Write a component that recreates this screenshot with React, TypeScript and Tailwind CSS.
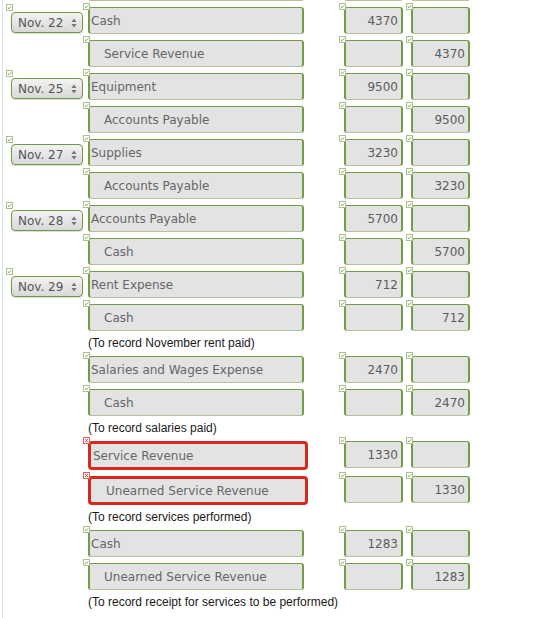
import React from 'react';

type Line =
  | {
      kind: 'row';
      date?: string;
      account: string;
      indent?: boolean;
      debit?: string;
      credit?: string;
      error?: boolean;
    }
  | { kind: 'memo'; text: string };

const lines: Line[] = [
  { kind: 'row', account: '' },
  { kind: 'row', date: 'Nov. 22', account: 'Cash', debit: '4370' },
  { kind: 'row', account: 'Service Revenue', indent: true, credit: '4370' },
  { kind: 'row', date: 'Nov. 25', account: 'Equipment', debit: '9500' },
  { kind: 'row', account: 'Accounts Payable', indent: true, credit: '9500' },
  { kind: 'row', date: 'Nov. 27', account: 'Supplies', debit: '3230' },
  { kind: 'row', account: 'Accounts Payable', indent: true, credit: '3230' },
  { kind: 'row', date: 'Nov. 28', account: 'Accounts Payable', debit: '5700' },
  { kind: 'row', account: 'Cash', indent: true, credit: '5700' },
  { kind: 'row', date: 'Nov. 29', account: 'Rent Expense', debit: '712' },
  { kind: 'row', account: 'Cash', indent: true, credit: '712' },
  { kind: 'memo', text: '(To record November rent paid)' },
  { kind: 'row', account: 'Salaries and Wages Expense', debit: '2470' },
  { kind: 'row', account: 'Cash', indent: true, credit: '2470' },
  { kind: 'memo', text: '(To record salaries paid)' },
  { kind: 'row', account: 'Service Revenue', debit: '1330', error: true },
  { kind: 'row', account: 'Unearned Service Revenue', indent: true, credit: '1330', error: true },
  { kind: 'memo', text: '(To record services performed)' },
  { kind: 'row', account: 'Cash', debit: '1283' },
  { kind: 'row', account: 'Unearned Service Revenue', indent: true, credit: '1283' },
  { kind: 'memo', text: '(To record receipt for services to be performed)' },
];

function Mark({ bad }: { bad?: boolean }) {
  return (
    <svg className="absolute left-0 top-0" width="7" height="7" viewBox="0 0 7 7">
      <rect x="0.5" y="0.5" width="6" height="6" fill="#fff" stroke={bad ? '#e0605a' : '#a9c28a'} />
      {bad ? (
        <path d="M2.2 2.2 L4.8 4.8 M4.8 2.2 L2.2 4.8" stroke="#d52b1e" strokeWidth="1" />
      ) : (
        <path d="M1.9 3.7 L3 4.7 L5.2 2.4" fill="none" stroke="#5f9632" strokeWidth="0.9" />
      )}
    </svg>
  );
}

function DateSelect({ value }: { value: string }) {
  return (
    <div className="relative mt-[1px] w-[77px] pl-[5px] pt-[8px]">
      <Mark />
      <div className="flex h-[21px] w-[72px] items-center justify-between rounded-[4px] border border-[#6f9b40] bg-gradient-to-b from-[#f3f3f3] to-[#d9d9d9] pl-[6px] pr-[5px] text-[12px] text-[#555] shadow-[0_1px_1px_rgba(0,0,0,0.15)]">
        <span>{value}</span>
        <svg width="6" height="10" viewBox="0 0 6 10">
          <path d="M3 0.5 L5.6 4 L0.4 4 Z" fill="#777" />
          <path d="M3 9.5 L5.6 6 L0.4 6 Z" fill="#777" />
        </svg>
      </div>
    </div>
  );
}

function Amount({ value, tall }: { value?: string; tall?: boolean }) {
  return (
    <div className={`relative pl-[5px] pt-[4px] ${tall ? 'h-[35px]' : 'h-[33px]'}`}>
      <Mark />
      <div className="flex h-[27px] w-[59px] items-center justify-end rounded-[3px] border border-x-2 border-[#729d45] border-b-[#b2c49c] bg-[#e3e3e3] pr-[3px] text-[12px] text-[#5c5c5c]">
        {value}
      </div>
    </div>
  );
}

export default function App() {
  return (
    <div className="ml-[2px] h-[618px] overflow-hidden border-l border-[#dde3ea] bg-white pl-[3px] font-['DejaVu_Sans',sans-serif]">
      <div className="-mt-[30px]">
        {lines.map((line, i) => {
          if (line.kind === 'memo') {
            return (
              <div
                key={i}
                className="flex h-[19px] items-center pl-[82px] font-['Liberation_Sans',sans-serif] text-[12px] text-[#1a1a1a]"
              >
                {line.text}
              </div>
            );
          }
          return (
            <div key={i} className="flex items-start">
              {line.date ? <DateSelect value={line.date} /> : <div className="w-[77px]" />}
              <div className={`relative w-[256px] pl-[5px] pt-[4px] ${line.error ? 'h-[35px]' : 'h-[33px]'}`}>
                <Mark bad={line.error} />
                {line.error ? (
                  <div
                    className={`flex h-[29px] w-[220px] items-center rounded-[4px] border-[3px] border-[#d8281c] bg-[#e3e3e3] pt-[1px] text-[12px] text-[#666] ${
                      line.indent ? 'pl-[15px]' : 'pl-[2px]'
                    }`}
                  >
                    {line.account}
                  </div>
                ) : (
                  <div
                    className={`flex h-[27px] w-[216px] items-center rounded-[3px] border border-x-2 border-[#729d45] border-b-[#b2c49c] bg-[#e3e3e3] pt-[1px] text-[12px] text-[#666] ${
                      line.indent ? 'pl-[14px]' : 'pl-[1px]'
                    }`}
                  >
                    {line.account}
                  </div>
                )}
              </div>
              <Amount value={line.debit} tall={line.error} />
              <div className="w-[3px]" />
              <Amount value={line.credit} tall={line.error} />
            </div>
          );
        })}
      </div>
    </div>
  );
}
